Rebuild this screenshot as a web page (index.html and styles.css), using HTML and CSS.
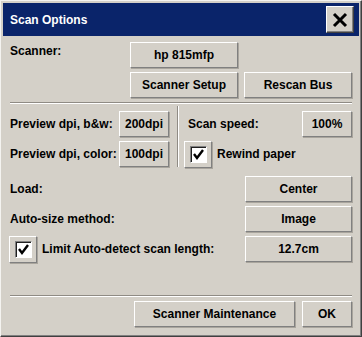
FILE: index.html
```html
<!DOCTYPE html>
<html>
<head>
<meta charset="utf-8">
<link rel="stylesheet" href="styles.css">
</head>
<body>
<div class="window">
  <div class="titlebar">
    <span class="title">Scan Options</span>
    <div class="close">
      <svg width="16" height="16" viewBox="0 0 16 16"><path d="M2 2 L14 14 M14 2 L2 14" stroke="#000" stroke-width="3" fill="none"/></svg>
    </div>
  </div>
  <div class="body">
    <div class="sec-scanner">
      <div class="lbl scanner-lbl">Scanner:</div>
      <div class="btn">hp 815mfp</div>
      <div class="btn setup">Scanner Setup</div>
      <div class="btn rescan">Rescan Bus</div>
    </div>
    <div class="sep"></div>
    <div class="sec-preview">
      <div class="col-left">
        <div class="row"><span class="lbl">Preview dpi, b&amp;w:</span><div class="btn small">200dpi</div></div>
        <div class="row"><span class="lbl">Preview dpi, color:</span><div class="btn small">100dpi</div></div>
      </div>
      <div class="vsep"></div>
      <div class="col-right">
        <div class="row"><span class="lbl speed">Scan speed:</span><div class="btn small">100%</div></div>
        <div class="row start">
          <div class="chk"><div class="box"><svg width="13" height="13" viewBox="0 0 13 13"><path d="M2 6 L5 10 L11 2" stroke="#000" stroke-width="2.4" fill="none"/></svg></div></div>
          <span class="lbl chk-lbl">Rewind paper</span>
        </div>
      </div>
    </div>
    <div class="sec-load">
      <div class="row"><span class="lbl">Load:</span><div class="btn wide">Center</div></div>
      <div class="row"><span class="lbl">Auto-size method:</span><div class="btn wide">Image</div></div>
      <div class="row">
        <div class="chk first"><div class="box"><svg width="13" height="13" viewBox="0 0 13 13"><path d="M2 6 L5 10 L11 2" stroke="#000" stroke-width="2.4" fill="none"/></svg></div></div>
        <span class="lbl chk-lbl grow">Limit Auto-detect scan length:</span>
        <div class="btn wide">12.7cm</div>
      </div>
    </div>
    <div class="sep bottom"></div>
    <div class="footer">
      <div class="btn maint">Scanner Maintenance</div>
      <div class="btn small">OK</div>
    </div>
  </div>
</div>
</body>
</html>
```

FILE: styles.css
```css
* { box-sizing: border-box; }
html, body { margin: 0; padding: 0; background: #d4d0c8; }
body {
  font-family: "Liberation Sans", Arial, sans-serif;
  font-size: 12px;
  font-weight: bold;
  color: #000;
}
.window {
  width: 362px;
  height: 337px;
  background: #d4d0c8;
  border: 1px solid;
  border-color: #f4f3f0 #404040 #404040 #f4f3f0;
  box-shadow: inset -1px -1px #808080;
  padding: 2px;
  display: flex;
  flex-direction: column;
}
.titlebar {
  height: 33px;
  background: #0a246a;
  display: flex;
  align-items: center;
  justify-content: space-between;
  padding: 0 5px 0 7px;
}
.title {
  color: #fff;
  font-size: 12px;
  font-weight: bold;
}
.close {
  width: 28px;
  height: 27px;
  background: #d4d0c8;
  border: 1px solid;
  border-color: #fff #404040 #404040 #fff;
  box-shadow: inset -1px -1px #808080;
  display: flex;
  align-items: center;
  justify-content: center;
}
.body {
  flex: 1;
  display: flex;
  flex-direction: column;
  padding: 0 7px 7px 7px;
}
.btn {
  height: 26px;
  background: #d4d0c8;
  border: 1px solid;
  border-color: #fff #808080 #808080 #fff;
  box-shadow: 1px 1px 0 #a9a59d;
  display: flex;
  align-items: center;
  justify-content: center;
  white-space: nowrap;
}
.lbl { white-space: nowrap; }
.sec-scanner {
  margin-top: 6px;
  display: grid;
  grid-template-columns: 114px 108px 108px;
  column-gap: 6px;
  grid-template-rows: 26px 26px;
  row-gap: 4px;
}
.scanner-lbl { padding-top: 2px; }
.setup { grid-column: 2; grid-row: 2; }
.rescan { grid-column: 3; grid-row: 2; }
.sep {
  height: 2px;
  border-top: 1px solid #8f8b84;
  border-bottom: 1px solid #fff;
  margin-top: 4px;
}
.sec-preview {
  display: flex;
}
.col-left {
  width: 159px;
  padding-top: 7px;
  display: flex;
  flex-direction: column;
  gap: 4px;
}
.col-right {
  flex: 1;
  padding-top: 7px;
  display: flex;
  flex-direction: column;
  gap: 4px;
}
.row {
  height: 26px;
  display: flex;
  align-items: center;
  justify-content: space-between;
}
.row.start { justify-content: flex-start; }
.small { width: 50px; }
.wide { width: 107px; }
.maint { width: 161px; }
.vsep {
  width: 2px;
  margin: 2px 5px 0 8px;
  border-left: 1px solid #8f8b84;
  border-right: 1px solid #fff;
}
.speed { padding-left: 4px; }
.chk {
  width: 28px;
  height: 27px;
  background: #d4d0c8;
  border: 1px solid;
  border-color: #fff #808080 #808080 #fff;
  box-shadow: 1px 1px 0 #a9a59d;
  display: flex;
  align-items: center;
  justify-content: center;
  flex: none;
}
.chk.first { margin-left: -1px; }
.box {
  width: 17px;
  height: 17px;
  background: #fff;
  border: 1px solid;
  border-color: #808080 #fff #fff #808080;
  box-shadow: inset 1px 1px #202020;
  display: flex;
  align-items: center;
  justify-content: center;
}
.chk-lbl { margin-left: 5px; }
.grow { flex: 1; }
.sec-load {
  margin-top: 9px;
  display: flex;
  flex-direction: column;
  gap: 4px;
}
.sep.bottom { margin-top: auto; }
.footer {
  margin-top: 4px;
  display: flex;
  justify-content: flex-end;
  gap: 7px;
}
```
